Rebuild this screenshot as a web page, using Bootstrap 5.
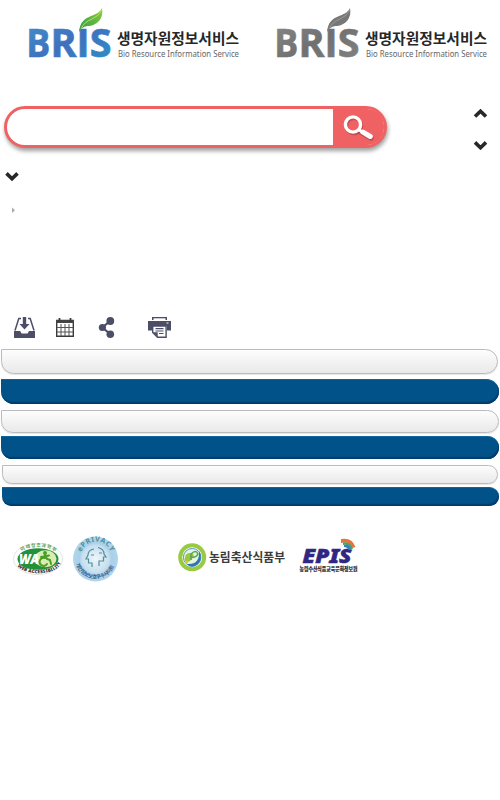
<!DOCTYPE html>
<html lang="ko">
<head>
<meta charset="utf-8">
<meta name="viewport" content="width=device-width, initial-scale=1">
<title>BRIS 생명자원정보서비스</title>
<link href="https://cdn.jsdelivr.net/npm/bootstrap@5.3.0/dist/css/bootstrap.min.css" rel="stylesheet">
<style>
body{font-family:"Noto Sans","Noto Sans CJK KR",sans-serif;background:#fff;overflow:hidden}
svg{display:block;flex:none}
svg text{font-family:"Noto Sans","Noto Sans CJK KR",sans-serif}
svg .ko{font-family:"Noto Sans CJK KR",sans-serif;font-weight:700}
svg .bris{font-family:"Open Sans","Noto Sans",sans-serif;font-weight:700;font-size:39.5px}
.page{width:500px;height:800px}
.brands{height:106px;padding:8px 0 0 28px;gap:36px}
.tools{height:64px;padding-left:4px}
.search{width:383px;height:42px;border:3px solid #f06163;border-radius:21px;box-shadow:1px 3px 4px rgba(0,0,0,.38);background:#fff}
.search input{min-width:0;background:transparent;box-shadow:none!important}
.search button{width:60px;background:#f06163;padding:0;border:0;border-radius:0 17px 17px 0}
.arrows{margin:2px 12px 0 0;gap:20px}
.sub{height:146px;padding:1px 0 0 5px}
.actions{height:33px;padding-left:13px}
.pill{border-radius:0 13px 13px 13px}
.pill-light{border:1px solid #b9bbbd;background:linear-gradient(#fdfdfd,#e9e9e9);box-shadow:0 1px 1px rgba(0,0,0,.1)}
.pill-dark{background:#005288;border-top:1px solid #0a669b;box-shadow:inset -1px -2px 1px #003c6c}
.h-a{height:25px}.h-b{height:23px}.h-c{height:19px}
.marks{padding:30px 0 0 12px}
</style>
</head>
<body>
<div class="page d-flex flex-column">
<header class="brands d-flex align-items-start">
<svg width="212" height="52" viewBox="28 8 212 52" role="img">
<defs>
<linearGradient id="blue" x1="0" y1="0" x2="1" y2="1"><stop stop-color="#4193ce"/><stop offset=".5" stop-color="#3f70bd"/><stop offset="1" stop-color="#2995c9"/></linearGradient>
<linearGradient id="leaf" x1="1" y1="0" x2="0" y2="1"><stop stop-color="#8fce3b"/><stop offset="1" stop-color="#289a4a"/></linearGradient>
</defs>
<text class="bris" y="57.3" fill="url(#blue)" stroke="url(#blue)" stroke-width=".7"><tspan x="26.2" textLength="24" lengthAdjust="spacingAndGlyphs">B</tspan><tspan x="50.5">R</tspan><tspan x="76.5">I</tspan><tspan x="89.7">S</tspan></text>
<path d="M79 32C80 22 84 19 91 16C97 14 101 11 102 8C104 19 97 25 89 26C84 26 82 28 79 32Z" fill="url(#leaf)"/>
<path d="M81 29Q84 22 92 19Q99 16 102 10" fill="none" stroke="#b9df68" stroke-width="1"/>
<text class="ko" x="117" y="44.3" font-size="14.5" textLength="122" lengthAdjust="spacingAndGlyphs" fill="#272727">생명자원정보서비스</text>
<text x="118" y="57" font-size="8" textLength="121" lengthAdjust="spacingAndGlyphs" fill="#666">Bio Resource Information Service</text>
</svg>
<svg width="212" height="52" viewBox="28 8 212 52" role="img">
<defs><linearGradient id="gray" x1="0" y1="0" x2="1" y2="1"><stop stop-color="#8a8a8a"/><stop offset=".5" stop-color="#707070"/><stop offset="1" stop-color="#858585"/></linearGradient></defs>
<text class="bris" y="57.3" fill="url(#gray)" stroke="url(#gray)" stroke-width=".7"><tspan x="26.2" textLength="24" lengthAdjust="spacingAndGlyphs">B</tspan><tspan x="50.5">R</tspan><tspan x="76.5">I</tspan><tspan x="89.7">S</tspan></text>
<path d="M79 32C80 22 84 19 91 16C97 14 101 11 102 8C104 19 97 25 89 26C84 26 82 28 79 32Z" fill="#777"/>
<path d="M81 29Q84 22 92 19Q99 16 102 10" fill="none" stroke="#999" stroke-width="1"/>
<text class="ko" x="117" y="44.3" font-size="14.5" textLength="122" lengthAdjust="spacingAndGlyphs" fill="#272727">생명자원정보서비스</text>
<text x="118" y="57" font-size="8" textLength="121" lengthAdjust="spacingAndGlyphs" fill="#666">Bio Resource Information Service</text>
</svg>
</header>
<div class="tools d-flex justify-content-between align-items-start">
<form class="search d-flex">
<input class="form-control border-0 rounded-pill flex-grow-1" aria-label="검색">
<button class="btn d-flex align-items-center justify-content-center" type="button" aria-label="검색">
<svg width="34" height="30" viewBox="338 110 34 30"><g fill="none" stroke="#a33c40" stroke-opacity=".55" transform="translate(1 1.5)"><circle cx="350" cy="122.5" r="7.6" stroke-width="3.4"/><path d="M356 128L367 134.5" stroke-width="5.5" stroke-linecap="round"/></g><g fill="none" stroke="#fff"><circle cx="350" cy="122.5" r="7.6" stroke-width="3.4"/><path d="M356 127.5L359 130" stroke-width="3"/><path d="M360 130.2L367.3 134.5" stroke-width="5" stroke-linecap="round"/></g></svg>
</button>
</form>
<div class="arrows d-flex flex-column">
<svg width="15" height="11" viewBox="0 0 15 11"><path d="M2 8.5L7.5 3.2L13 8.5" fill="none" stroke="#282828" stroke-width="3.6"/></svg>
<svg width="15" height="11" viewBox="0 0 15 11"><path d="M2 3.4L7.5 8.7L13 3.4" fill="none" stroke="#282828" stroke-width="3.6"/></svg>
</div>
</div>
<div class="sub d-flex flex-column">
<svg width="15" height="11" viewBox="0 0 15 11"><path d="M1.5 2.4L7 7.7L12.5 2.4" fill="none" stroke="#282828" stroke-width="3.6"/></svg>
<svg class="ms-1 mt-4" width="8" height="8" viewBox="9 206 8 8"><path d="M12 207.5L15 210.3L12 213Z" fill="#aaa"/></svg>
</div>
<div class="actions d-flex">
<svg width="160" height="23" viewBox="13 315 160 23">
<g fill="#4b4e66"><path d="M14 330h6.2l1.4 2.5h6l1.4-2.5H35v7H14Z"/><path d="M22.8 316h3.4v7h3.3L24.5 328.5 19.5 323h3.3Z"/></g>
<path d="M21 317.5H18.8L15 329.5M28 317.5h2.2L34 329.5" fill="none" stroke="#4b4e66" stroke-width="1.5"/>
<g fill="none" stroke="#3b3b3b"><path d="M56.7 319.5h16.6v15.8H56.7Z" stroke-width="1.4"/><path d="M56 320.5h18" stroke-width="3" stroke="#444"/><path d="M59.5 317v4M70.5 317v4" stroke-width="1.8"/><path d="M61 323v12M65 323v12M69 323v12M57 326.5h16M57 331h16" stroke="#555" stroke-width="1"/></g>
<path d="M110 320L102.5 326.5L110 333" fill="none" stroke="#4b4e66" stroke-width="2.2"/><g fill="#4b4e66"><circle cx="110.3" cy="320" r="3.9"/><circle cx="102.4" cy="326.5" r="3.6"/><circle cx="110.3" cy="333.2" r="3.8"/>
<path d="M152 316h15v3h-15ZM148 320h23v9.5h-4V325h-15v4.5h-4Z"/></g><path d="M153.5 317.3h12v2h-12Z" fill="#fff"/><path d="M152.7 325h13.4v11.2H157.5L152.7 331.5Z" fill="#fff" stroke="#4b4e66" stroke-width="1.4"/><path d="M155.5 327.7h8M155.5 330h8M159 332.5h4.5" stroke="#4b4e66" stroke-width="1.2"/><path d="M153 331.2h4.7v5Z" fill="#4b4e66"/><path d="M166.5 322h2" stroke="#fff"/>
</svg>
</div>
<div class="d-flex flex-column">
<div class="pill pill-light h-a ms-px" style="margin:0 2px 0 1px"></div>
<div class="pill pill-dark h-a" style="margin:5px 1px 0 1px"></div>
<div class="pill pill-light h-b" style="margin:6px 1px 0 1px"></div>
<div class="pill pill-dark h-b" style="margin:3px 1px 0 1px"></div>
<div class="pill pill-light h-c" style="margin:6px 2px 0 2px"></div>
<div class="pill pill-dark h-c" style="margin:3px 1px 0 2px"></div>
</div>
<footer class="marks d-flex">
<svg width="350" height="46" viewBox="12 536 350 46">
<defs><path id="waTop" d="M18.5 555A20 10.5 0 0 1 57.5 555"/><path id="waBottom" d="M16 563.5A22.5 11.5 0 0 0 60.5 563.5"/><path id="epTop" d="M80.5 557A15.5 15.5 0 0 1 111.5 557"/><path id="epBottom" d="M75.2 561A20.5 20.5 0 0 0 115.8 561"/><radialGradient id="disc"><stop stop-color="#edf6fb"/><stop offset=".6" stop-color="#c6dfee"/><stop offset=".72" stop-color="#a9cfe9"/><stop offset="1" stop-color="#b0d5ef"/></radialGradient></defs>
<ellipse cx="38" cy="559" rx="24.5" ry="15.5" fill="#fff" stroke="#e2e8dd"/>
<ellipse cx="38" cy="559" rx="20.5" ry="10.8" fill="#22913a"/>
<ellipse cx="45.5" cy="558.8" rx="11" ry="8.5" fill="#d9edb0"/>
<text x="19" y="564" font-size="14" font-weight="900" font-style="italic" fill="#fff" textLength="20" lengthAdjust="spacingAndGlyphs">WA</text>
<g fill="none" stroke="#499d28" stroke-width="2" stroke-linecap="round"><circle cx="45" cy="553" r="1" fill="#499d28"/><path d="M45 555L47 559L50 560L51 564M41 557L49 555.5M45 558A4 4 0 1 0 47 564"/></g>
<text font-size="4.8" class="ko" fill="#509c55"><textPath href="#waTop" startOffset="5" textLength="35">미래창조과학부</textPath></text>
<text font-size="4.7" font-weight="900" fill="#333"><textPath href="#waBottom" startOffset="3" textLength="49">WEB ACCESSIBILITY</textPath></text>
<circle cx="95.5" cy="559" r="22.5" fill="url(#disc)"/>
<text font-size="7" font-weight="700" fill="#4f8f91"><textPath href="#epTop" startOffset="5" textLength="38">ePRIVACY</textPath></text>
<g fill="none" stroke="#568d9d" stroke-width="1.2"><path d="M94 549Q88 550 88 555L86 559H88.5V563H92V567M98 547.5Q104 549 104 554L106 557H103.5V561H99V566"/><path d="M91 555h3M99 553h3"/></g>
<text font-size="5.3" class="ko" fill="#315c8e"><textPath href="#epBottom" startOffset="3" textLength="50">개인정보보호우수사이트</textPath></text>
<circle cx="192.2" cy="557.3" r="12" fill="#fff" stroke="#9aca42" stroke-width="4"/>
<circle cx="192.2" cy="557.3" r="8.8" fill="#e8f4e0" stroke="#4b9cc5" stroke-width="1"/>
<path d="M185 561Q184 552 191 553Q196 554 192 559Q188 564 185 561" fill="#9cc841"/><path d="M187 564Q200 565 199 551Q204 561 195 566Q190 568 187 564" fill="#2e78b8"/><path d="M191 560V554Q196 549 198 554Q196 558 191 557" fill="none" stroke="#53a55a" stroke-width="1.5"/><circle cx="186.5" cy="562" r="1.5" fill="#efc235"/>
<text class="ko" x="209" y="561.6" font-size="12" textLength="76" lengthAdjust="spacingAndGlyphs" fill="#393b3d">농림축산식품부</text>
<text x="302.5" y="562.5" font-size="18.5" font-weight="900" font-style="italic" fill="#302783" stroke="#302783" stroke-width=".5" textLength="49" lengthAdjust="spacingAndGlyphs">EPIS</text>
<path d="M341 539Q352 537 355.5 547L352.5 548Q349 541 341 543Z" fill="#e47536"/><path d="M343 542.5Q351 541 353 549L350.5 549.5Q348 544 343 545Z" fill="#48a276"/><path d="M344 545Q350 544 351 550H348.5Q347 547 344 547Z" fill="#397ec0"/>
<text class="ko" x="299.5" y="571.3" font-size="5.4" textLength="58" lengthAdjust="spacingAndGlyphs" fill="#222" stroke="#222" stroke-width=".2">농림수산식품교육문화정보원</text>
</svg>
</footer>
</div>
<script src="https://cdn.jsdelivr.net/npm/bootstrap@5.3.0/dist/js/bootstrap.bundle.min.js"></script>
</body>
</html>
